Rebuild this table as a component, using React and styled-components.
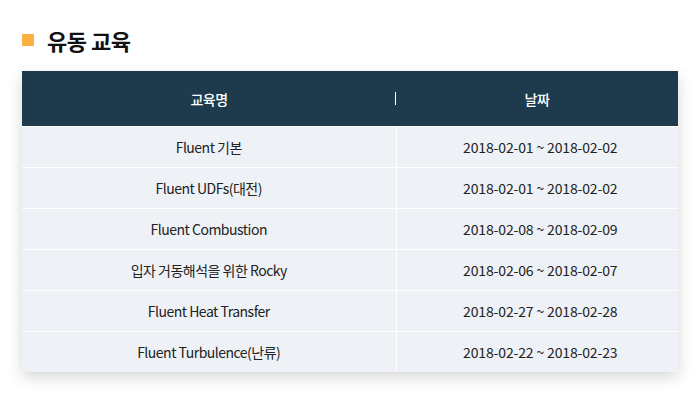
import React from "react";
import styled, { createGlobalStyle } from "styled-components";

const rows = [
  { name: "Fluent 기본", date: "2018-02-01 ~ 2018-02-02" },
  { name: "Fluent UDFs(대전)", date: "2018-02-01 ~ 2018-02-02" },
  { name: "Fluent Combustion", date: "2018-02-08 ~ 2018-02-09" },
  { name: "입자 거동해석을 위한 Rocky", date: "2018-02-06 ~ 2018-02-07" },
  { name: "Fluent Heat Transfer", date: "2018-02-27 ~ 2018-02-28" },
  { name: "Fluent Turbulence(난류)", date: "2018-02-22 ~ 2018-02-23" },
];

const App = () => (
  <>
    <GlobalStyle />
    <Page>
      <TitleStyled>
        <Mark />
        유동 교육
      </TitleStyled>
      <TableWrap>
        <TableStyled>
          <thead>
            <tr>
              <HeadCell divider>교육명</HeadCell>
              <HeadCell>날짜</HeadCell>
            </tr>
          </thead>
          <tbody>
            {rows.map((row, key) => (
              <tr key={key}>
                <Cell>{row.name}</Cell>
                <Cell date>{row.date}</Cell>
              </tr>
            ))}
          </tbody>
        </TableStyled>
      </TableWrap>
    </Page>
  </>
);

export default App;

// styled
const GlobalStyle = createGlobalStyle`
  body {
    margin: 0;
    background: #fff;
    font-family: "Noto Sans CJK KR", "Noto Sans", sans-serif;
  }
`;

const Page = styled.div`
  min-height: 400px;
  box-sizing: border-box;
  padding: 25px 22px 30px;
`;

const TitleStyled = styled.h2`
  display: flex;
  align-items: center;
  margin: 0 0 16px;
  font-size: 22px;
  font-weight: 700;
  color: #111;
  letter-spacing: -0.5px;
  line-height: 30px;
`;

const Mark = styled.span`
  width: 12px;
  height: 12px;
  background: #f9b03f;
  margin-right: 13px;
`;

const TableWrap = styled.div`
  width: 656px;
  box-shadow: 0 5px 14px rgba(0, 0, 0, 0.16);
`;

const TableStyled = styled.table`
  width: 100%;
  border-collapse: collapse;
  table-layout: fixed;
`;

const HeadCell = styled.th`
  position: relative;
  height: 55px;
  padding: 0;
  background: #1e3b4d;
  color: #fff;
  font-size: 14px;
  font-weight: 500;
  letter-spacing: -0.5px;
  width: ${props => (props.divider ? "374px" : "auto")};

  &::after {
    content: "";
    display: ${props => (props.divider ? "block" : "none")};
    position: absolute;
    right: 0;
    top: 21px;
    width: 1px;
    height: 13px;
    background: #fff;
  }
`;

const Cell = styled.td`
  height: 40px;
  padding: 0 0 0 ${props => (props.date ? "6px" : "0")};
  background: #eef1f6;
  border-top: 1px solid #fff;
  text-align: center;
  color: #222;
  font-size: 14px;
  letter-spacing: ${props => (props.date ? "-0.15px" : "-0.5px")};

  & + & {
    border-left: 1px solid #fff;
  }
`;
